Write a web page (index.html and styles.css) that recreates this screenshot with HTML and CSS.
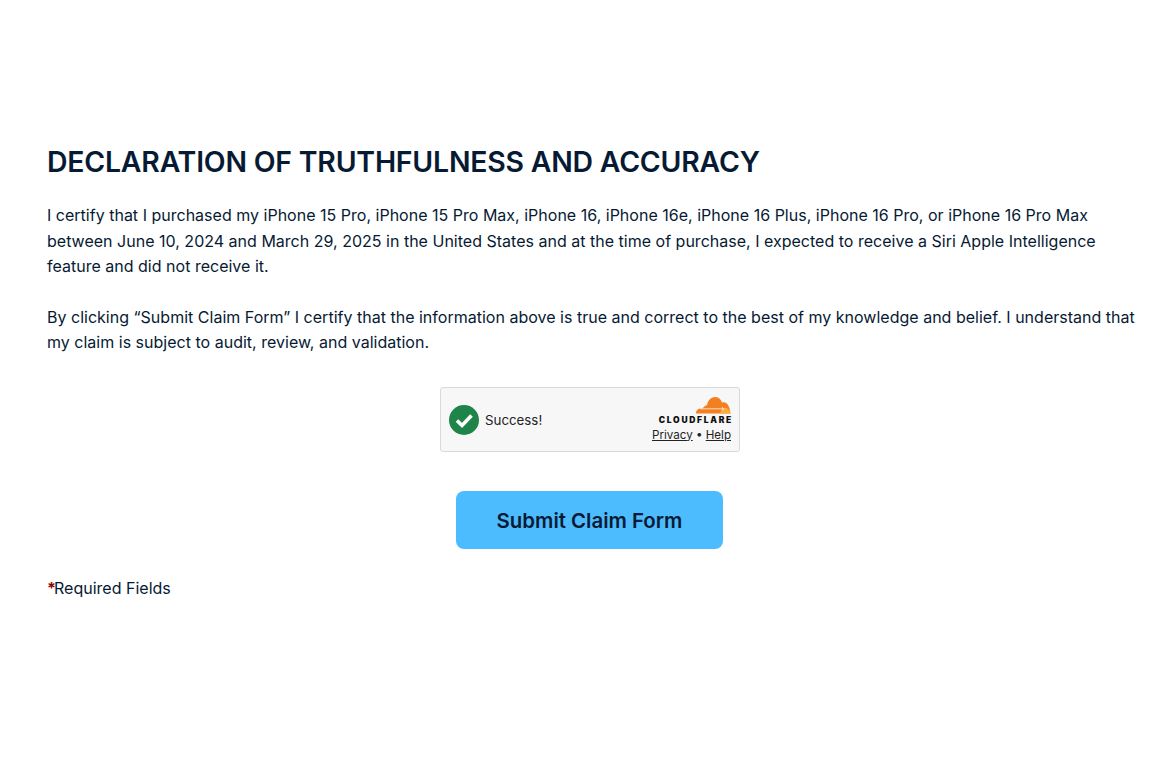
FILE: index.html
```html
<!DOCTYPE html>
<html lang="en">
<head>
  <meta charset="UTF-8" />
  <meta name="viewport" content="width=device-width, initial-scale=1.0" />
  <title>Declaration</title>
  <link rel="stylesheet" href="styles.css">
</head>
<body>
  <main class="claim">
    <h1>DECLARATION OF TRUTHFULNESS AND ACCURACY</h1>
    <p>I certify that I purchased my iPhone 15 Pro, iPhone 15 Pro Max, iPhone 16, iPhone 16e, iPhone 16 Plus, iPhone 16 Pro, or iPhone 16 Pro Max between June 10, 2024 and March 29, 2025 in the United States and at the time of purchase, I expected to receive a Siri Apple Intelligence feature and did not receive it.</p>
    <p>By clicking “Submit Claim Form” I certify that the information above is true and correct to the best of my knowledge and belief. I understand that my claim is subject to audit, review, and validation.</p>

    <div class="captcha">
      <div class="captcha-status">
        <svg class="check" viewBox="0 0 30 30" width="30" height="30">
          <circle cx="15" cy="15" r="15" fill="#1e8449" />
          <path d="M8 15.5l5 5L22.5 10.5" fill="none" stroke="#fff" stroke-width="3.6" />
        </svg>
        <span>Success!</span>
      </div>
      <div class="captcha-brand">
        <svg class="cloud" viewBox="0 0 36 18" width="36" height="18">
          <path d="M1 17.5c0-3 2-5 5-5 .6 0 1 0 1.400.1C9 10.500 10.500 9.500 12 9c.8-4 3.500-8 8-8 3.500 0 6 2 7 5.500 1-.4 2-.4 3 0 3 1 5 5 5.500 11z" fill="#f38020" />
          <path d="M25 17.500c.5-3 3-5.500 5.500-5.500 2.500 0 4.500 2.500 5 5.500z" fill="#faae40" />
          <path d="M5 12.800h24M27 11l1.500 1.800L27 14.500" fill="none" stroke="#fff" stroke-width="0.700" />
        </svg>
        <div class="wordmark">CLOUDFLARE</div>
        <div class="captcha-links"><a href="#">Privacy</a> • <a href="#">Help</a></div>
      </div>
    </div>

    <div class="actions">
      <button class="submit">Submit Claim Form</button>
    </div>

    <p class="required"><span class="star">*</span>Required Fields</p>
  </main>
</body>
</html>
```

FILE: styles.css
```css
body {
  margin: 0;
  background: #fff;
  color: #071a33;
  font-family: "Inter", "Liberation Sans", sans-serif;
}
.claim {
  padding: 143px 34px 0 47px;
}
h1 {
  margin: 0 0 22px;
  font-size: 28.4px;
  line-height: 38px;
  font-weight: 600;
  letter-spacing: -0.2px;
}
p {
  margin: 0 -6px 25px 0;
  font-size: 16px;
  line-height: 25.500px;
  font-weight: 400;
  letter-spacing: 0.010px;
}
.captcha {
  box-sizing: border-box;
  width: 300px;
  height: 65px;
  margin: 31px auto 0;
  padding: 0 8px;
  display: flex;
  justify-content: space-between;
  align-items: center;
  background: #f7f7f7;
  border: 1px solid #d9d9d9;
  border-radius: 3px;
  color: #232323;
  font-size: 13.3px;
}
.captcha-status {
  display: flex;
  align-items: center;
  gap: 6px;
  padding-top: 1px;
}
.check {
  display: block;
}
.captcha-brand {
  display: flex;
  flex-direction: column;
  align-items: flex-end;
  padding: 1px 0 2px;
}
.cloud {
  display: block;
  margin: 1px 0 2px;
}
.wordmark {
  font-size: 8.500px;
  line-height: 9px;
  font-weight: 900;
  letter-spacing: 1.700px;
  margin-right: -2px;
  color: #111;
}
.captcha-links {
  margin-top: 3px;
  font-size: 11.600px;
  line-height: 15px;
}
.captcha-links a {
  color: #232323;
}
.actions {
  display: flex;
  justify-content: center;
  margin-top: 39px;
  padding-right: 1px;
}
.submit {
  width: 267px;
  height: 58px;
  padding: 2px 0 0;
  border: none;
  border-radius: 8px;
  background: #4dbcff;
  color: #071a33;
  font-family: inherit;
  font-size: 20.400px;
  font-weight: 600;
  cursor: pointer;
}
.required {
  margin: 27px 0 0;
}
.star {
  margin-right: -2px;
  color: #8b0000;
  font-weight: 700;
}
```
